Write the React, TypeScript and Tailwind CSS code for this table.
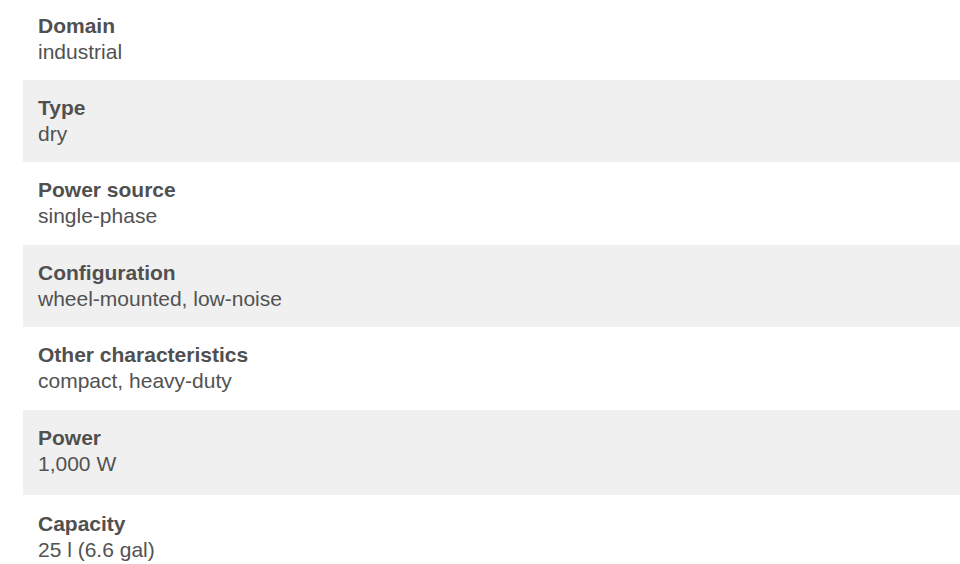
import React from "react";

const rows: { label: string; value: string; extra?: string }[] = [
  { label: "Domain", value: "industrial", extra: "pt-[12.5px] pb-[15px]" },
  { label: "Type", value: "dry" },
  { label: "Power source", value: "single-phase" },
  { label: "Configuration", value: "wheel-mounted, low-noise" },
  { label: "Other characteristics", value: "compact, heavy-duty" },
  { label: "Power", value: "1,000 W", extra: "pt-[15px] pb-[18px]" },
  { label: "Capacity", value: "25 l (6.6 gal)", extra: "pt-[16px] pb-[15px]" },
];

export default function App() {
  return (
    <div className="w-[960px] h-[564px] overflow-hidden bg-white pl-[23px] font-['Liberation_Sans',Arial,sans-serif] text-[21px] leading-[26px] text-[#525252]">
      {rows.map((r, i) => (
        <div
          key={r.label}
          className={`pl-[15px] ${r.extra ?? "pt-[15px] pb-[15.5px]"} ${i % 2 === 1 ? "bg-[#f0f0f0]" : "bg-white"}`}
        >
          <div className="font-bold text-[#505050]">{r.label}</div>
          <div>{r.value}</div>
        </div>
      ))}
    </div>
  );
}
